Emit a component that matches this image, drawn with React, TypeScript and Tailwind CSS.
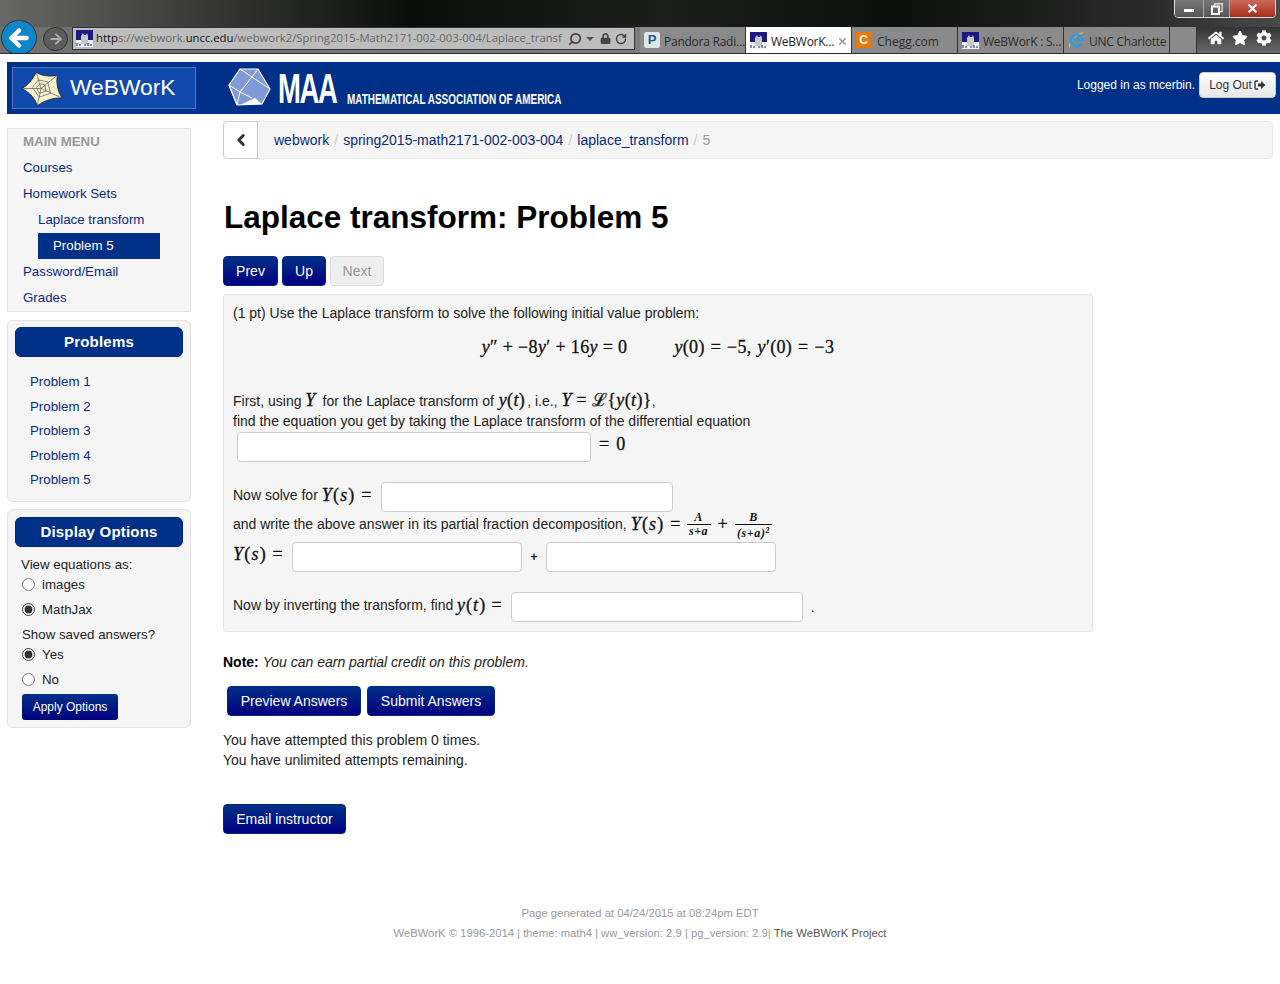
import React from 'react';
import { ArrowLeft, ArrowRight, ChevronLeft, RotateCw, Search, X } from 'lucide-react';
import { FaCog, FaHome, FaLock, FaStar } from 'react-icons/fa';

const NAVY = 'bg-[#003087]';

// small favicon of the webwork site, drawn roughly
const WwFavicon = () => (
  <svg width="17" height="17" viewBox="0 0 17 17" className="shrink-0">
    <rect width="17" height="17" fill="#1a1a80" />
    <rect x="0" y="10" width="17" height="7" fill="#f2f2f2" />
    <path d="M5 14V6l2-3 1 2h2l1-2 1 3v8z" fill="#c9c9c9" />
    <path d="M1 13v3M4 14v2M9 14v2M12 13v3M15 14v2" stroke="#1a1a80" strokeWidth="1" />
  </svg>
);

const IeIcon = () => (
  <svg width="17" height="18" viewBox="0 0 18 18" className="shrink-0">
    <path d="M2 17C0 13 8 3 16 1" fill="none" stroke="#e8b92f" strokeWidth="1.2" />
    <path d="M14 13A6 6 0 1 1 15 8.5H5M5 11" fill="none" stroke="#2f9be0" strokeWidth="2.6" />
  </svg>
);

const Tab = ({ icon, label, active, tight }: { icon: React.ReactNode; label: string; active?: boolean; tight?: boolean }) => (
  <div
    className={`flex items-center gap-[4px] w-[106px] h-[26px] pl-[4px] border-r border-[#333] text-[12px] whitespace-nowrap overflow-hidden font-['Open_Sans'] ${
      active ? 'bg-white text-[#222]' : 'text-[#2b2b2b]'
    }`}
  >
    {icon}
    <span className={`pt-[3px] ${tight ? 'tracking-[-0.25px]' : ''}`}>{label}</span>
    {active && <X size={11} strokeWidth={3.5} className="text-[#999] -ml-[1px] mt-[2px]" />}
  </div>
);

const BrowserChrome = () => (
  <div className="relative h-[54px] bg-[linear-gradient(90deg,#686866_0%,#3e3e3c_14%,#0b0f0c_32%,#1c1f1c_52%,#0c100c_70%,#2b2b2b_90%,#4a4a4a_100%)] border-b border-[#2c2c2c] flex flex-col justify-end overflow-hidden">
    {/* window buttons */}
    <div className="absolute right-[4px] top-[-1px] flex h-[19px] border border-[#ddd] rounded-b-[4px] overflow-hidden">
      <div className="w-[29px] bg-[linear-gradient(#777,#555)] flex items-center justify-center border-r border-[#aaa]">
        <div className="w-[10px] h-[3px] mt-[4px] bg-white" />
      </div>
      <div className="w-[26px] bg-[linear-gradient(#777,#555)] flex items-center justify-center border-r border-[#aaa]">
        <svg width="12" height="12" viewBox="0 0 12 12">
          <path d="M3.5 2.5V.8h7.7v7.7H9" fill="none" stroke="#ddd" strokeWidth="1.4" />
          <rect x="1" y="3.5" width="7" height="7.5" fill="none" stroke="white" strokeWidth="2" />
        </svg>
      </div>
      <div className="w-[45px] bg-[linear-gradient(#c86a5c,#a82c1c)] flex items-center justify-center">
        <X size={13} strokeWidth={4} className="text-white" />
      </div>
    </div>

    <div className="flex items-start h-[26px] bg-[linear-gradient(90deg,#6f6f6d_0%,#7c7c7a_50%,#858585_60%,#555_100%)]">
      <div className="relative w-[72px] h-[26px] shrink-0">
        <div className="absolute left-[1px] top-[-7px] w-[36px] h-[35px] rounded-full bg-[#0d87c8] border border-[#333] flex items-center justify-center">
          <ArrowLeft size={26} strokeWidth={4} className="text-white" />
        </div>
        <div className="absolute left-[43px] top-[0px] w-[25px] h-[24px] rounded-full bg-[#5c5c5c] border border-[#333] flex items-center justify-center">
          <ArrowRight size={16} strokeWidth={3} className="text-[#ababab]" />
        </div>
      </div>

      <div className="flex items-center w-[563px] h-[23px] shrink-0 bg-[#bdbdbd] border border-[#333] pl-[3px] text-[11.3px] font-['Open_Sans'] text-[#666] whitespace-nowrap overflow-hidden">
        <WwFavicon />
        <span className="ml-[3px] w-[469px] shrink-0">
          <span className="text-[#111]">http</span>s://webwork.<span className="text-[#111]">uncc.edu</span>/webwork2/Spring2015-Math2171-002-003-004/Laplace_transf
        </span>
        <Search size={14} strokeWidth={3} className="text-[#444] ml-[3px] shrink-0 -scale-x-100" />
        <span className="w-0 h-0 ml-[4px] border-x-[4px] border-x-transparent border-t-[4px] border-t-[#555] shrink-0" />
        <FaLock size={11} className="text-[#444] ml-[6px] shrink-0" />
        <RotateCw size={12} strokeWidth={3} className="text-[#444] ml-[4px] shrink-0" />
      </div>

      <div className="flex ml-[5px] shrink-0 bg-[#8a8a8a] w-[557px] h-[26px]">
        <Tab
          tight
          label="Pandora Radi…"
          icon={
            <span className="w-[16px] h-[16px] rounded-[2px] bg-[#dfe6ea] text-[#1c5a8a] text-[13px] font-bold leading-[16px] text-center font-['Liberation_Sans'] shrink-0">P</span>
          }
        />
        <Tab tight label="WeBWorK…" active icon={<WwFavicon />} />
        <Tab
          label="Chegg.com"
          icon={
            <span className="w-[15px] h-[16px] mr-[2px] bg-[#e8790c] text-white text-[12px] font-bold leading-[16px] text-center font-['Liberation_Sans'] shrink-0">C</span>
          }
        />
        <Tab tight label="WeBWorK : S…" icon={<WwFavicon />} />
        <Tab tight label="UNC Charlotte" icon={<IeIcon />} />
        <div className="w-[27px] border-r border-[#333]" />
      </div>

      <div className="flex items-center gap-[8px] pl-[11px] pb-[4px] h-[26px] flex-1 text-white bg-[linear-gradient(#333,#6a6a6a)]">
        <FaHome size={16} />
        <FaStar size={16} />
        <FaCog size={16} />
      </div>
    </div>
  </div>
);

const WebworkStar = () => (
  <svg width="42" height="37" viewBox="0 0 44 38" className="shrink-0">
    <path d="M1 19Q10 14 16 2Q25 8 38 5Q36 18 43 29Q30 28 17 37Q14 26 1 19Z" fill="#f5f2cf" stroke="#2a2a2a" strokeWidth="1" />
    <path d="M21 19L1 19M21 19L16 2M21 19L38 5M21 19L43 29M21 19L17 37" stroke="#555" strokeWidth="0.7" />
    <path d="M12 18L18 10L28 12L31 24L19 28Z M16 18L20 14L25 15L26 22L19 24Z" fill="none" stroke="#555" strokeWidth="0.7" />
  </svg>
);

const MaaMark = () => (
  <svg width="44" height="40" viewBox="0 0 44 40" className="shrink-0">
    <path d="M1 17L12 1L30 1L42 21L34 36L9 37Z" fill="#7f9ad6" stroke="white" strokeWidth="1.2" />
    <path d="M1 17L9 37M12 1L24 9L30 1M24 9L42 21M24 9L12 24L1 17M12 24L9 37M12 24L24 30" fill="none" stroke="white" strokeWidth="1" />
    <path d="M12 37L27 30L34 36Z" fill="white" />
  </svg>
);

const Header = () => (
  <header className={`ml-[7px] mt-[8px] h-[52px] ${NAVY} flex items-center text-white`}>
    <div className="ml-[5px] w-[184px] h-[42px] bg-[#1149ad] border border-[#4f74bd] flex items-center pl-[8px] gap-[7px] text-[22.8px] shrink-0">
      <WebworkStar />
      <span className="pb-[2px]">WeBWorK</span>
    </div>
    <div className="ml-[32px] flex items-center w-[335px] shrink-0">
      <MaaMark />
      <span className="ml-[6px] w-[62px] text-[43px] leading-[40px] font-bold origin-left scale-x-[0.64] tracking-tighter">MAA</span>
      <span className="ml-[7px] mt-[21px] text-[14px] font-bold whitespace-nowrap origin-left scale-x-[0.71] leading-none">MATHEMATICAL ASSOCIATION OF AMERICA</span>
    </div>
    <div className="ml-auto flex items-center gap-[4px] mr-[4px] pb-[6px]">
      <span className="text-[12px]">Logged in as mcerbin.</span>
      <button className="w-[77px] h-[26px] rounded-[4px] bg-[linear-gradient(#fff,#e6e6e6)] border border-[#ccc] text-[12px] text-[#333] flex items-center justify-center gap-[2px]">
        Log Out
        <svg width="12" height="10" viewBox="0 0 12 10">
          <path d="M4 1H2Q1 1 1 2V8Q1 9 2 9H4" fill="none" stroke="#333" strokeWidth="1.4" />
          <path d="M4 3.5H7V1L11.5 5L7 9V6.5H4Z" fill="#333" />
        </svg>
      </button>
    </div>
  </header>
);

const MenuLink = ({ children, indent }: { children: React.ReactNode; indent?: boolean }) => (
  <a className={`block h-[26px] leading-[28px] text-[#0a2a80] ${indent ? 'pl-[30px]' : 'pl-[15px]'}`}>{children}</a>
);

const Radio = ({ label, checked }: { label: string; checked?: boolean }) => (
  <label className="flex items-center h-[25px] pl-[1px] gap-[7px]">
    <input type="radio" readOnly checked={!!checked} className="w-[13px] h-[13px] m-0 accent-[#333]" />
    <span>{label}</span>
  </label>
);

const PanelTitle = ({ children }: { children: React.ReactNode }) => (
  <div className={`h-[30px] rounded-[6px] ${NAVY} border border-[#002a78] text-white font-bold text-[15px] leading-[28px] text-center tracking-[0.2px]`}>{children}</div>
);

const Sidebar = () => (
  <aside className="w-[184px] shrink-0 mt-[14px] text-[13.3px] flex flex-col">
    <div className="h-[184px] bg-[#f5f5f5] border border-[#e3e3e3]">
      <div className="h-[25px] leading-[26px] pl-[15px] font-bold text-[#999]">MAIN MENU</div>
      <MenuLink>Courses</MenuLink>
      <MenuLink>Homework Sets</MenuLink>
      <MenuLink indent>Laplace transform</MenuLink>
      <div className={`mt-[1px] ml-[30px] w-[122px] h-[26px] leading-[25px] pl-[15px] text-white ${NAVY}`}>Problem 5</div>
      <div className="-mt-[1px]">
        <MenuLink>Password/Email</MenuLink>
      </div>
      <MenuLink>Grades</MenuLink>
    </div>

    <div className="mt-[8px] h-[182px] bg-[#f5f5f5] border border-[#e3e3e3] rounded-[6px] px-[7px] pt-[6px]">
      <PanelTitle>Problems</PanelTitle>
      <div className="mt-[13px] pl-[15px] text-[#0a2a80] leading-[24.6px]">
        <div>Problem 1</div>
        <div>Problem 2</div>
        <div>Problem 3</div>
        <div>Problem 4</div>
        <div>Problem 5</div>
      </div>
    </div>

    <div className="mt-[7px] h-[219px] bg-[#f5f5f5] border border-[#e3e3e3] rounded-[6px] px-[7px] pt-[7px] text-[#222]">
      <PanelTitle>Display Options</PanelTitle>
      <div className="mt-[8px] pl-[6px] leading-[20px]">View equations as:</div>
      <div className="-mt-[3px] pl-[6px]">
        <Radio label="images" />
        <Radio label="MathJax" checked />
      </div>
      <div className="mt-[3px] pl-[7px] leading-[20px]">Show saved answers?</div>
      <div className="-mt-[3px] pl-[6px]">
        <Radio label="Yes" checked />
        <Radio label="No" />
      </div>
      <button className="ml-[7px] mt-[2px] w-[96px] h-[26px] rounded-[3px] bg-[linear-gradient(#003087,#000080)] text-white text-[12px]">Apply Options</button>
    </div>
  </aside>
);

const Btn = ({ children, className }: { children: React.ReactNode; className?: string }) => (
  <button className={`h-[30px] rounded-[4px] bg-[linear-gradient(#003087,#000080)] border border-[#002a78] text-white text-[14px] ${className ?? ''}`}>{children}</button>
);

// MathJax-like inline math
const M = ({ children, className }: { children: React.ReactNode; className?: string }) => (
  <span className={`font-['Liberation_Serif'] text-[18px] text-[#111] tracking-[0.35px] [-webkit-text-stroke:0.3px_#111] ${className ?? ''}`}>{children}</span>
);
const I = ({ children }: { children: React.ReactNode }) => <i>{children}</i>;

const Field = ({ className }: { className: string }) => (
  <div className={`h-[30px] bg-white border border-[#ccc] rounded-[4px] shrink-0 ${className}`} />
);

const Frac = ({ top, bottom, width }: { top: React.ReactNode; bottom: React.ReactNode; width: string }) => (
  <span className={`inline-flex flex-col items-center font-['Liberation_Serif'] text-[12px] leading-[13px] font-bold italic text-[#111] tracking-[0.6px] align-middle ${width}`}>
    <span className="border-b border-[#111] w-full text-center">{top}</span>
    <span>{bottom}</span>
  </span>
);

const ProblemBox = () => (
  <div className="mt-[8px] w-[870px] h-[338px] bg-[#f5f5f5] border border-[#e3e3e3] rounded-[3px] pl-[9px] pt-[8px] text-[14px] text-[#222]">
    <div className="h-[20px] leading-[20px]">(1 pt) Use the Laplace transform to solve the following initial value problem:</div>
    <div className="mt-[10px] h-[28px] leading-[28px] text-center pr-[9px]">
      <M>
        <I>y</I>″ + −8<I>y</I>′ + 16<I>y</I> = 0
      </M>
      <M className="ml-[47px] [word-spacing:1px]">
        <I>y</I>(0) = −5, <I>y</I>′(0) = −3
      </M>
    </div>
    <div className="mt-[29px] h-[20px] leading-[20px] whitespace-nowrap">
      First, using <M className="mr-[3px]"><I>Y</I></M> for the Laplace transform of <M className="ml-[1px] mr-[2px]"><I>y</I>(<I>t</I>)</M>, i.e., <M><I>Y</I> = ℒ{'{'}<I>y</I>(<I>t</I>){'}'}</M>,
    </div>
    <div className="mt-[1px] h-[20px] leading-[20px]">find the equation you get by taking the Laplace transform of the differential equation</div>
    <div className="mt-[1px] flex items-center pl-[4px]">
      <Field className="w-[354px]" />
      <M className="ml-[8px] -mt-[6px] [word-spacing:2px]">= 0</M>
    </div>
    <div className="mt-[20px] flex items-center">
      <span className="-mt-[4px]">Now solve for&nbsp;</span>
      <M className="-mt-[4px] !tracking-[1.2px]"><I>Y</I>(<I>s</I>) =</M>
      <Field className="w-[292px] ml-[8px]" />
    </div>
    <div className="h-[30px] pb-[6px] flex items-center whitespace-nowrap">
      <span>and write the above answer in its partial fraction decomposition,&nbsp;</span>
      <M className="!tracking-[1.2px]"><I>Y</I>(<I>s</I>) =</M>
      <span className="ml-[5px]"><Frac width="w-[24px]" top="A" bottom="s+a" /></span>
      <M className="mx-[7px]">+</M>
      <Frac
        width="w-[37px]"
        top="B"
        bottom={
          <span className="inline-block translate-y-[2px]">
            (s+a)<sup className="text-[8px]">2</sup>
          </span>
        }
      />
    </div>
    <div className="flex items-center">
      <M className="-mt-[5px] !tracking-[1.2px]"><I>Y</I>(<I>s</I>) =</M>
      <Field className="w-[230px] ml-[8px]" />
      <span className="w-[24px] text-center text-[12px] font-bold">+</span>
      <Field className="w-[230px]" />
    </div>
    <div className="mt-[20px] flex items-center">
      <span className="-mt-[4px]">Now by inverting the transform, find&nbsp;</span>
      <M className="-mt-[4px] !tracking-[1px]"><I>y</I>(<I>t</I>) =</M>
      <Field className="w-[292px] ml-[8px]" />
      <span className="ml-[8px]">.</span>
    </div>
  </div>
);

const Footer = () => (
  <footer className="mt-[69px] text-[11.25px] leading-[20px] text-[#999] text-center">
    <div>Page generated at 04/24/2015 at 08:24pm EDT</div>
    <div>
      WeBWorK © 1996-2014 | theme: math4 | ww_version: 2.9 | pg_version: 2.9| <span className="text-[#555]">The WeBWorK Project</span>
    </div>
  </footer>
);

const App: React.FC = () => {
  return (
    <div className="w-[1280px] h-[984px] bg-white overflow-hidden font-['Liberation_Sans',sans-serif]">
      <BrowserChrome />
      <Header />
      <div className="flex pl-[7px]">
        <Sidebar />
        <main className="ml-[32px] w-[1050px] pt-[7px]">
          <div className="flex items-center h-[38px] bg-[#f5f5f5] border border-[#e8e8e8] rounded-[4px] text-[14px] text-[#0a2a80]">
            <div className="w-[35px] h-[38px] -ml-[1px] bg-white border border-[#ccc] rounded-l-[4px] flex items-center justify-center">
              <ChevronLeft size={18} strokeWidth={4} className="text-[#333]" />
            </div>
            <span className="ml-[16px]">webwork</span>
            <span className="mx-[5px] text-[#ccc]">/</span>
            <span>spring2015-math2171-002-003-004</span>
            <span className="mx-[5px] text-[#ccc]">/</span>
            <span>laplace_transform</span>
            <span className="mx-[5px] text-[#ccc]">/</span>
            <span className="text-[#999]">5</span>
          </div>

          <h1 className="mt-[38px] ml-[1px] h-[40px] leading-[40px] text-[31.5px] font-bold text-black">Laplace transform: Problem 5</h1>

          <div className="mt-[19px] flex gap-[4px]">
            <Btn className="w-[55px]">Prev</Btn>
            <Btn className="w-[44px]">Up</Btn>
            <button className="w-[54px] h-[30px] rounded-[4px] bg-[#eee] border border-[#ddd] text-[#999] text-[14px]">Next</button>
          </div>

          <ProblemBox />

          <p className="mt-[20px] h-[20px] leading-[20px] text-[14px] text-[#222]">
            <b className="text-black">Note:</b> <i>You can earn partial credit on this problem.</i>
          </p>

          <div className="mt-[14px] ml-[4px] flex gap-[6px]">
            <Btn className="w-[134px]">Preview Answers</Btn>
            <Btn className="w-[128px]">Submit Answers</Btn>
          </div>

          <div className="mt-[14px] text-[14px] leading-[20px] text-[#222]">
            <div>You have attempted this problem 0 times.</div>
            <div>You have unlimited attempts remaining.</div>
          </div>

          <Btn className="mt-[34px] w-[123px] block">Email instructor</Btn>
        </main>
      </div>
      <Footer />
    </div>
  );
};

export default App;
